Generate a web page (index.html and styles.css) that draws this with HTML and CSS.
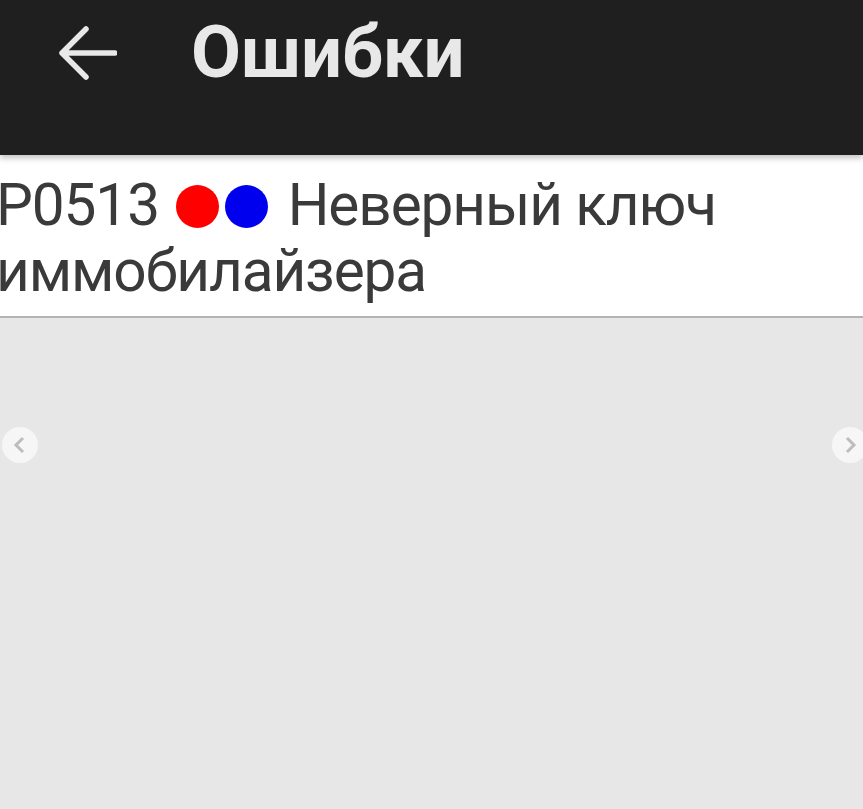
FILE: index.html
```html
<!DOCTYPE html>
<html lang="ru">
<head>
<meta charset="utf-8">
<link rel="stylesheet" href="styles.css">
</head>
<body>
<header class="appbar">
  <svg class="back" width="60" height="60" viewBox="0 0 60 60"><path d="M58 29H5M29 5L5 29L29 53" fill="none" stroke="#e8e8e8" stroke-width="5.5" stroke-linecap="round" stroke-linejoin="round"/></svg>
  <h1 class="title">Ошибки</h1>
</header>
<main class="content">
  <div class="item">
    <p class="item-text">P0513 <span class="dot red"></span><span class="dot blue"></span> Неверный ключ иммобилайзера</p>
  </div>
  <button class="nav prev"><svg width="16" height="18" viewBox="0 0 16 18"><path d="M11 2L4 9L11 16" fill="none" stroke="#bdbdbd" stroke-width="3"/></svg></button>
  <button class="nav next"><svg width="16" height="18" viewBox="0 0 16 18"><path d="M5 2L12 9L5 16" fill="none" stroke="#bdbdbd" stroke-width="3"/></svg></button>
</main>
</body>
</html>
```
FILE: styles.css
```css
html, body {
  margin: 0;
  padding: 0;
  height: 100%;
}
body {
  background: #e7e7e7;
  font-family: Roboto, "Noto Sans", sans-serif;
  overflow: hidden;
}
.appbar {
  height: 155px;
  background: #1f1f1f;
  display: flex;
  align-items: flex-start;
  padding: 24px 0 0 57px;
  box-sizing: border-box;
  position: relative;
  z-index: 2;
  box-shadow: 0 3px 6px rgba(0,0,0,0.25);
}
.back {
  display: block;
}
.title {
  margin: -15px 0 0 74px;
  color: #e8e8e8;
  font-size: 72.5px;
  font-weight: 700;
  line-height: 88px;
}
.content {
  position: relative;
  height: calc(100% - 155px);
}
.item {
  background: #fff;
  border-bottom: 2px solid #b4b4b4;
  height: 163px;
  box-sizing: border-box;
  padding-top: 17px;
  overflow: hidden;
}
.item-text {
  margin: 0 0 0 -4px;
  color: #3a3a3a;
  font-size: 58.5px;
  line-height: 66px;
  letter-spacing: -1.1px;
  width: 760px;
}
.dot {
  display: inline-block;
  width: 43px;
  height: 43px;
  border-radius: 50%;
  vertical-align: -3px;
}
.red { background: #fe0000; margin-right: 6px; margin-left: 4px; }
.blue { background: #0000ee; margin-right: 6px; }
.nav {
  position: absolute;
  top: 272px;
  width: 36px;
  height: 36px;
  border-radius: 50%;
  border: none;
  background: #f6f6f6;
  display: flex;
  align-items: center;
  justify-content: center;
  padding: 0;
}
.prev { left: 2px; }
.next { right: -5px; }
```
